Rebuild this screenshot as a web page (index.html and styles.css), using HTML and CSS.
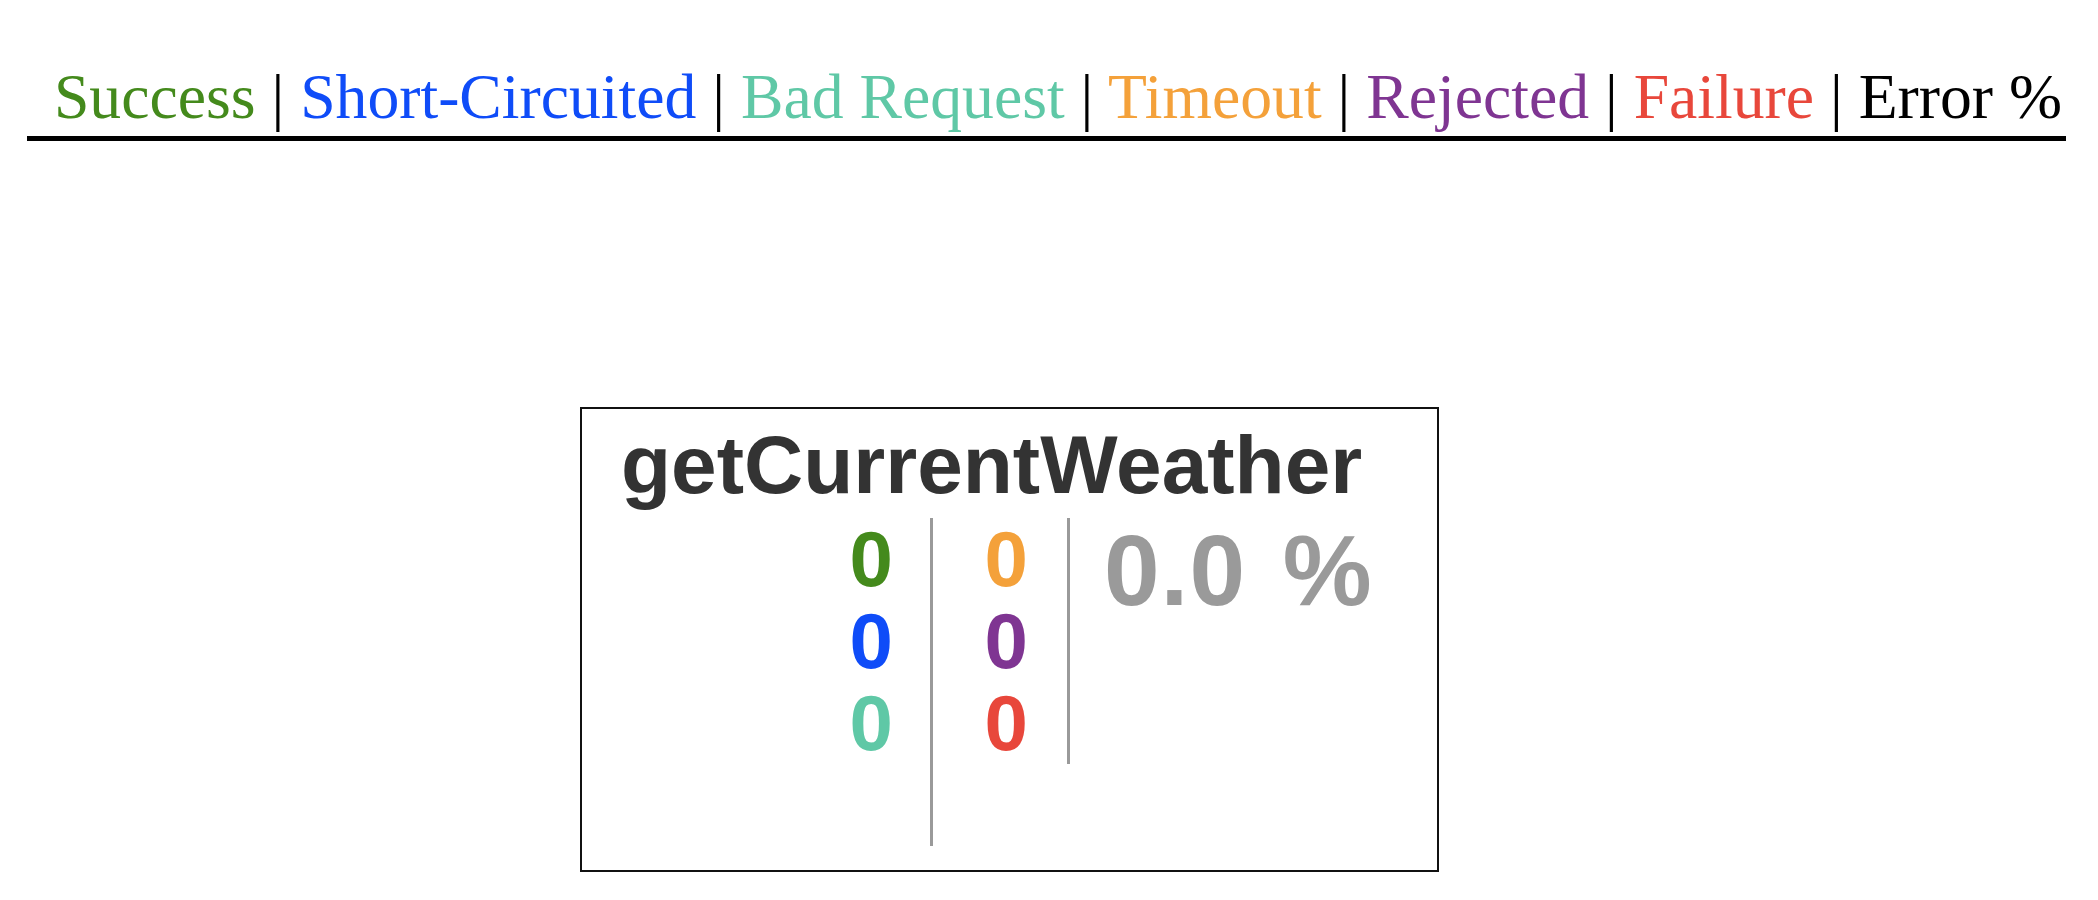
FILE: index.html
```html
<!DOCTYPE html>
<html>
<head>
<meta charset="utf-8">
<title>Hystrix Monitor</title>
<link rel="stylesheet" href="styles.css">
</head>
<body>
<div class="legend"><span class="success">Success</span> | <span class="short">Short-Circuited</span> | <span class="bad">Bad Request</span> | <span class="timeout">Timeout</span> | <span class="rejected">Rejected</span> | <span class="failure">Failure</span> | Error %</div>
<div class="monitor">
  <div class="name">getCurrentWeather</div>
  <div class="counters">
    <div class="col col-first">
      <div class="success">0</div>
      <div class="short">0</div>
      <div class="bad">0</div>
      <div class="blank">&nbsp;</div>
    </div>
    <div class="col col-second">
      <div class="timeout">0</div>
      <div class="rejected">0</div>
      <div class="failure">0</div>
    </div>
    <div class="rate">0.0 %</div>
  </div>
</div>
</body>
</html>
```

FILE: styles.css
```css
html, body {
  margin: 0;
  padding: 0;
  background: #ffffff;
}

.legend {
  margin: 60px 0 0 27px;
  width: 2039px;
  box-sizing: border-box;
  padding: 0 4px 2px 0;
  text-align: right;
  white-space: nowrap;
  font-family: "Liberation Serif", "Times New Roman", serif;
  font-size: 63.7px;
  line-height: normal;
  color: #000;
  border-bottom: 5px solid #000;
}

.success { color: #448a1c; }
.short { color: #0f4cf8; }
.bad { color: #5fc8a6; }
.timeout { color: #f4a13a; }
.rejected { color: #7f3592; }
.failure { color: #e8473b; }

.monitor {
  margin: 266px 0 0 580px;
  width: 859px;
  height: 465px;
  box-sizing: border-box;
  border: 2px solid #111;
  font-family: "Liberation Sans", Arial, sans-serif;
  font-weight: bold;
}

.name {
  padding: 15px 0 0 39px;
  font-size: 82px;
  line-height: 82px;
  color: #333;
  white-space: nowrap;
}

.counters {
  display: flex;
  align-items: flex-start;
  margin-top: 12px;
}

.col {
  font-size: 78px;
  line-height: 82px;
  text-align: right;
  border-right: 3px solid #9a9a9a;
}

.col-first {
  width: 351px;
  box-sizing: border-box;
  padding-right: 37px;
}

.col-second {
  width: 137px;
  box-sizing: border-box;
  padding-right: 39px;
}

.rate {
  padding: 2px 0 0 34px;
  font-size: 100px;
  line-height: 100px;
  letter-spacing: 1px;
  word-spacing: 8px;
  color: #9a9a9a;
  white-space: nowrap;
}
```
